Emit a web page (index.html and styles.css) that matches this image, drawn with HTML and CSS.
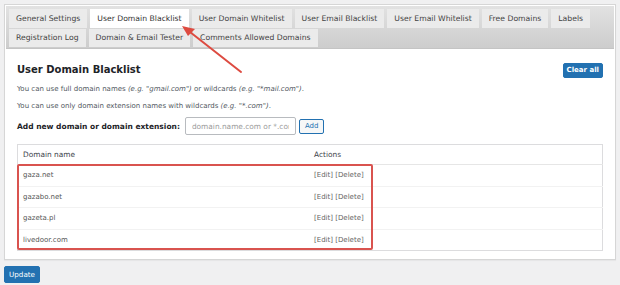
FILE: index.html
```html
<!DOCTYPE html>
<html lang="en">
<head>
    <meta charset="UTF-8">
    <title>User Domain Blacklist</title>
    <link rel="stylesheet" href="styles.css">
</head>
<body>
    <div class="panel">
        <div class="tabs">
            <div class="tab-row">
                <a class="tab">General Settings</a>
                <a class="tab active">User Domain Blacklist</a>
                <a class="tab">User Domain Whitelist</a>
                <a class="tab">User Email Blacklist</a>
                <a class="tab">User Email Whitelist</a>
                <a class="tab">Free Domains</a>
                <a class="tab">Labels</a>
            </div>
            <div class="tab-row">
                <a class="tab">Registration Log</a>
                <a class="tab">Domain &amp; Email Tester</a>
                <a class="tab">Comments Allowed Domains</a>
            </div>
        </div>

        <div class="content">
            <div class="head">
                <h2>User Domain Blacklist</h2>
                <button class="button primary">Clear all</button>
            </div>
            <p class="desc">You can use full domain names <em>(e.g. "gmail.com")</em> or wildcards <em>(e.g. "*mail.com")</em>.</p>
            <p class="desc">You can use only domain extension names with wildcards <em>(e.g. "*.com")</em>.</p>

            <div class="add-row">
                <label>Add new domain or domain extension:</label>
                <input type="text" placeholder="domain.name.com or *.com">
                <button class="button secondary">Add</button>
            </div>

            <div class="table-wrap">
                <table class="list">
                    <thead>
                        <tr><th class="col-name">Domain name</th><th>Actions</th></tr>
                    </thead>
                    <tbody>
                        <tr><td>gaza.net</td><td class="actions">[Edit] [Delete]</td></tr>
                        <tr><td>gazabo.net</td><td class="actions">[Edit] [Delete]</td></tr>
                        <tr><td>gazeta.pl</td><td class="actions">[Edit] [Delete]</td></tr>
                        <tr><td>livedoor.com</td><td class="actions">[Edit] [Delete]</td></tr>
                    </tbody>
                </table>
                <div class="highlight"></div>
            </div>
        </div>
    </div>

    <button class="button primary update">Update</button>

    <svg class="arrow" width="620" height="285" viewBox="0 0 620 285">
        <line x1="241" y1="72" x2="190" y2="32" stroke="#dd4b41" stroke-width="2" stroke-linecap="round"/>
        <polygon points="182,26 195,29 188,36" fill="#dd4b41"/>
    </svg>
</body>
</html>
```

FILE: styles.css
```css
:root {
    --blue: #2271b1;
    --page-bg: #f0f0f1;
    --text: #2c3338;
    --text-light: #50575e;
    --red: #d9534f;
}

body {
    margin: 0;
    padding: 4px;
    background-color: var(--page-bg);
    font-family: "DejaVu Sans", Verdana, sans-serif;
    color: var(--text);
}

.panel {
    background-color: #fff;
    border: 1px solid #d6d6d6;
    padding: 1px 1px 8px;
    box-shadow: 0 1px 1px rgba(0, 0, 0, 0.04);
}

/* tab strip */
.tabs {
    background: linear-gradient(#e2e2e2, #cdcdcd);
    padding: 3px 3px 1px;
    border-bottom: 1px solid #c4c4c4;
}

.tab-row {
    display: flex;
    gap: 3px;
}

.tab-row + .tab-row {
    margin-top: 1px;
}

.tab {
    display: block;
    padding: 0 7px;
    height: 18px;
    line-height: 18px;
    font-size: 7.7px;
    color: #444;
    background-color: #ebebeb;
    white-space: nowrap;
}

.tab-row:first-child .tab {
    height: 19px;
    line-height: 19px;
}

.tab.active {
    background-color: #fff;
    color: #333;
}

/* content */
.content {
    padding: 0 11px;
}

.head {
    display: flex;
    justify-content: space-between;
    align-items: center;
    margin-top: 13px;
    height: 15px;
}

.head h2 {
    margin: 0;
    font-size: 10px;
    line-height: 15px;
    font-weight: bold;
    color: #1d2327;
}

.button {
    font-family: "DejaVu Sans", Verdana, sans-serif;
    border-radius: 2px;
    cursor: pointer;
}

.button.primary {
    background-color: var(--blue);
    border: 1px solid var(--blue);
    color: #fff;
    font-size: 7px;
    height: 15px;
    padding: 0 3px;
}

.head .button.primary {
    font-weight: bold;
    margin-top: 1px;
}

.button.secondary {
    background-color: #f6f7f7;
    border: 1px solid var(--blue);
    color: var(--blue);
    font-size: 7px;
    height: 15px;
    padding: 0 5px;
}

.desc {
    margin: 7px 0 0;
    font-size: 7px;
    line-height: 10px;
    color: var(--text-light);
}

.desc + .desc {
    margin-top: 7px;
}

.add-row {
    display: flex;
    align-items: center;
    margin-top: 6px;
    height: 18px;
}

.add-row label {
    font-size: 7.5px;
    font-weight: bold;
    color: #1d2327;
    margin-right: 5px;
}

.add-row input {
    width: 111px;
    height: 18px;
    box-sizing: border-box;
    border: 1px solid #b8bbbf;
    border-radius: 2px;
    padding: 0 6px;
    font-family: "DejaVu Sans", Verdana, sans-serif;
    font-size: 7.4px;
    margin-right: 3px;
}

.add-row input::placeholder {
    color: #9a9a9a;
}

/* table */
.table-wrap {
    position: relative;
    margin-top: 9px;
}

.list {
    width: 100%;
    border-collapse: collapse;
    border: 1px solid #dcdcde;
    font-size: 7px;
}

.list th {
    text-align: left;
    font-weight: normal;
    font-size: 7.4px;
    color: #3c434a;
    height: 19px;
    padding: 0 5px;
    border-bottom: 1px solid #e6e6e6;
}

.list .col-name {
    width: 281px;
}

.list td {
    height: 20.5px;
    padding: 0 5px;
    color: #555;
    border-bottom: 1px solid #f2f2f2;
}

.list tbody tr:last-child td {
    border-bottom: none;
}

.list .actions {
    color: #666;
}

.highlight {
    position: absolute;
    left: 0;
    top: 20px;
    width: 352px;
    height: 82px;
    border: 2px solid var(--red);
    border-radius: 2px;
}

.button.update {
    margin-top: 6px;
    height: 17px;
    padding: 0 4px;
    font-size: 7.2px;
}

.arrow {
    position: absolute;
    left: 0;
    top: 0;
    pointer-events: none;
}
```
